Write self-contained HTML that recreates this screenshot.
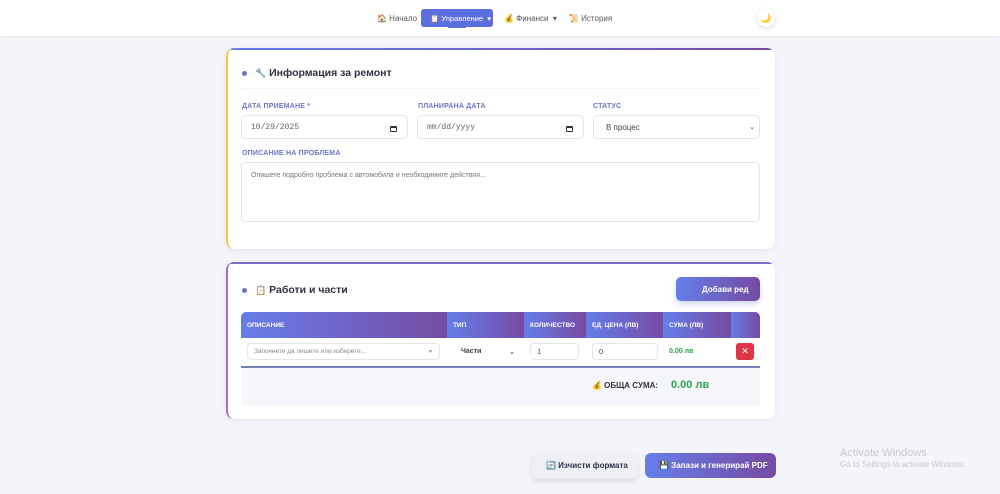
<!DOCTYPE html>
<html><head><meta charset="utf-8"><style>
*{box-sizing:border-box;margin:0;padding:0}
body{width:1000px;height:494px;background:#f4f5fa;font-family:"Liberation Sans","DejaVu Sans",sans-serif;position:relative;overflow:hidden;color:#2d3142}
.abs{position:absolute}
.nav{left:0;top:0;width:1000px;height:36px;background:#fff;box-shadow:0 1px 4px rgba(0,0,0,.06)}
.ni{font-size:8px;color:#555;top:14px}
.card{background:#fff;border-radius:8px;box-shadow:0 2px 8px rgba(0,0,0,.05);overflow:hidden}
.topbar{position:absolute;left:0;top:0;right:0;height:2px;background:linear-gradient(90deg,#667eea,#764ba2)}
.lbl{font-size:7px;color:#6a74c9;font-weight:bold;letter-spacing:.2px}
.inp{background:#fff;border:1px solid #e3e5ec;border-radius:4px;font-size:8px;color:#444;padding-left:9px;display:flex;align-items:center}
.h{font-size:10.5px;font-weight:bold;color:#2d3142}
.dot{width:5px;height:5px;border-radius:50%;background:#6a74c9}
.th{top:312px;height:26px;color:#fff;font-size:6.5px;font-weight:bold;display:flex;align-items:center;padding-left:6px;background:linear-gradient(90deg,#667eea,#764ba2)}
.cal{position:absolute;right:10px;top:10px;width:7px;height:6px;border:1px solid #333;border-top-width:2px;border-radius:1px}
</style></head><body>
<div class="abs nav"></div>
<div class="abs ni" style="left:377px">🏠 Начало</div>
<div class="abs" style="left:421px;top:9px;width:72px;height:18px;background:#5b6fe0;border-radius:3px;color:#fff;font-size:7.5px;padding:5px 0 0 9px">📋 Управление &nbsp;▾</div>
<div class="abs" style="left:448px;top:26px;width:18px;height:2px;background:#5b6fe0"></div>
<div class="abs ni" style="left:504px">💰 Финанси &nbsp;▾</div>
<div class="abs ni" style="left:569px">📜 История</div>
<div class="abs" style="left:757px;top:9px;width:18px;height:18px;border-radius:50%;background:#fff;box-shadow:0 1px 4px rgba(0,0,0,.15);font-size:9px;text-align:center;line-height:18px">🌙</div>

<div class="abs card" style="left:226px;top:48px;width:549px;height:201px;border-left:2px solid #f0c94a"><div class="topbar"></div></div>
<div class="abs dot" style="left:242px;top:71px"></div>
<div class="abs h" style="left:255px;top:67px"><span style="color:#aaa;font-size:9px">🔧</span> Информация за ремонт</div>
<div class="abs" style="left:242px;top:88px;width:518px;height:1px;background:#f1f2f6"></div>
<div class="abs lbl" style="left:242px;top:103px">ДАТА ПРИЕМАНЕ *</div>
<div class="abs lbl" style="left:418px;top:103px">ПЛАНИРАНА ДАТА</div>
<div class="abs lbl" style="left:593px;top:103px">СТАТУС</div>
<div class="abs inp" style="left:241px;top:115px;width:167px;height:24px;font-family:'Liberation Mono',monospace;color:#666">10/29/2025<span class="cal"></span></div>
<div class="abs inp" style="left:417px;top:115px;width:167px;height:24px;font-family:'Liberation Mono',monospace;color:#666">mm/dd/yyyy<span class="cal"></span></div>
<div class="abs inp" style="left:593px;top:115px;width:167px;height:24px;padding-left:12px">В процес<span style="position:absolute;right:4px;font-size:7px">⌄</span></div>
<div class="abs lbl" style="left:242px;top:150px">ОПИСАНИЕ НА ПРОБЛЕМА</div>
<div class="abs inp" style="left:241px;top:162px;width:519px;height:60px;align-items:flex-start;padding-top:9px;color:#777;font-size:7px">Опишете подробно проблема с автомобила и необходимите действия...</div>

<div class="abs card" style="left:226px;top:262px;width:549px;height:157px;border-left:2px solid #9a72c0"><div class="topbar" style="background:#7d6bc6"></div></div>
<div class="abs dot" style="left:242px;top:288px"></div>
<div class="abs h" style="left:255px;top:284px"><span style="font-size:9px">📋</span> Работи и части</div>
<div class="abs" style="left:676px;top:277px;width:84px;height:24px;border-radius:5px;background:linear-gradient(90deg,#667eea,#764ba2);color:#fff;font-size:8px;font-weight:bold;padding:8px 0 0 26px;box-shadow:0 3px 6px rgba(102,126,234,.3)">Добави ред</div>
<div class="abs th" style="left:241px;width:206px;border-top-left-radius:5px">ОПИСАНИЕ</div>
<div class="abs th" style="left:447px;width:77px">ТИП</div>
<div class="abs th" style="left:524px;width:62px">КОЛИЧЕСТВО</div>
<div class="abs th" style="left:586px;width:77px">ЕД. ЦЕНА (ЛВ)</div>
<div class="abs th" style="left:663px;width:68px">СУМА (ЛВ)</div>
<div class="abs th" style="left:731px;width:29px;border-top-right-radius:5px"></div>
<div class="abs inp" style="left:247px;top:343px;width:193px;height:17px;font-size:6.5px;color:#888;padding-left:6px">Започнете да пишете или изберете...<span style="position:absolute;right:6px;font-size:5px">▼</span></div>
<div class="abs inp" style="left:453px;top:343px;width:66px;height:17px;border:none;font-weight:bold;font-size:7px;padding-left:8px">Части<span style="position:absolute;right:4px">⌄</span></div>
<div class="abs inp" style="left:530px;top:343px;width:49px;height:17px;font-size:7.5px;padding-left:6px">1</div>
<div class="abs inp" style="left:592px;top:343px;width:66px;height:17px;font-size:7.5px;padding-left:6px">0</div>
<div class="abs" style="left:669px;top:348px;font-size:7px;font-weight:bold;color:#2ea44f">0.00 лв</div>
<div class="abs" style="left:736px;top:343px;width:18px;height:17px;background:#dc3545;border-radius:3px;color:#fff;font-size:9px;text-align:center;line-height:17px;font-weight:bold">✕</div>
<div class="abs" style="left:241px;top:366px;width:519px;height:2px;background:#7482b8"></div>
<div class="abs" style="left:241px;top:368px;width:519px;height:37px;background:#f6f7fb"></div>
<div class="abs" style="left:592px;top:381px;font-size:8px;font-weight:bold;color:#333">💰 ОБЩА СУМА:</div>
<div class="abs" style="left:671px;top:379px;font-size:11px;font-weight:bold;color:#2ea44f">0.00 лв</div>

<div class="abs" style="left:532px;top:453px;width:106px;height:25px;border-radius:6px;background:#eef0f6;box-shadow:0 3px 6px rgba(0,0,0,.1);font-size:8px;font-weight:bold;padding:8px 0 0 14px">🔄 Изчисти формата</div>
<div class="abs" style="left:645px;top:453px;width:131px;height:25px;border-radius:6px;background:linear-gradient(90deg,#667eea,#764ba2);color:#fff;font-size:8px;font-weight:bold;padding:8px 0 0 14px">💾 Запази и генерирай PDF</div>
<div class="abs" style="left:840px;top:447px;font-size:11px;color:#c8c9cf">Activate Windows</div>
<div class="abs" style="left:840px;top:460px;font-size:8px;color:#c8c9cf">Go to Settings to activate Windows.</div>
</body></html>
